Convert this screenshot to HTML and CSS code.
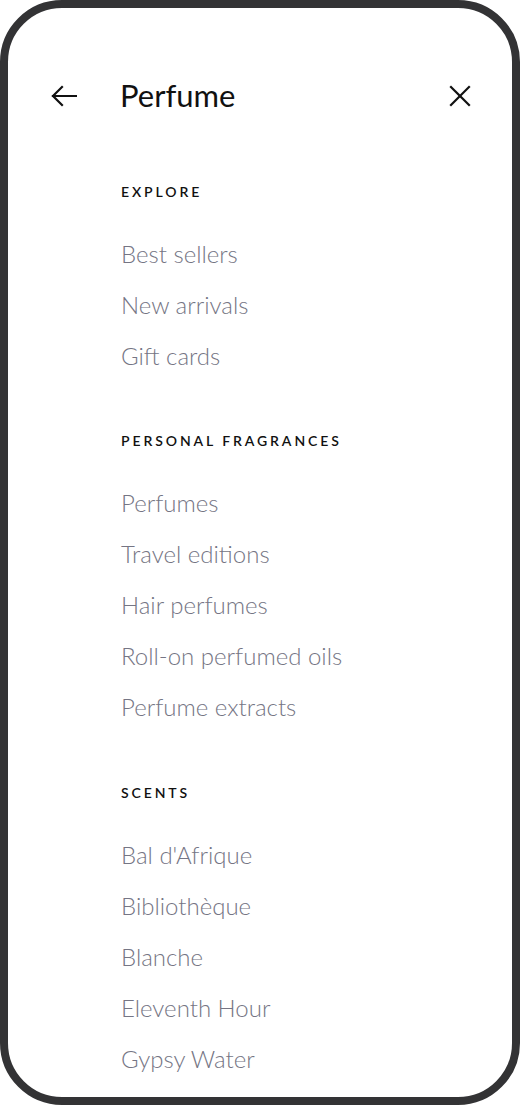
FILE: index.html
```html
<!DOCTYPE html>
<html lang="en">
<head>
<meta charset="utf-8">
<title>Perfume</title>
<link rel="stylesheet" href="styles.css">
</head>
<body>
<div class="phone">
  <header class="header">
    <button class="icon-btn back" aria-label="Back">
      <svg width="26" height="22" viewBox="0 0 26 22" fill="none" stroke="#111" stroke-width="2.2" stroke-linecap="square" stroke-linejoin="miter">
        <path d="M25 11H2"/>
        <path d="M11 2L2 11L11 20"/>
      </svg>
    </button>
    <h1 class="title">Perfume</h1>
    <button class="icon-btn close" aria-label="Close">
      <svg width="22" height="22" viewBox="0 0 22 22" fill="none" stroke="#111" stroke-width="2.2" stroke-linecap="square">
        <path d="M2 2L20 20"/>
        <path d="M20 2L2 20"/>
      </svg>
    </button>
  </header>
  <nav class="menu">
    <section class="group">
      <h2 class="label">Explore</h2>
      <ul class="items">
        <li>Best sellers</li>
        <li>New arrivals</li>
        <li>Gift cards</li>
      </ul>
    </section>
    <section class="group">
      <h2 class="label">Personal fragrances</h2>
      <ul class="items">
        <li>Perfumes</li>
        <li>Travel editions</li>
        <li>Hair perfumes</li>
        <li>Roll-on perfumed oils</li>
        <li>Perfume extracts</li>
      </ul>
    </section>
    <section class="group">
      <h2 class="label">Scents</h2>
      <ul class="items">
        <li>Bal d'Afrique</li>
        <li>Bibliothèque</li>
        <li>Blanche</li>
        <li>Eleventh Hour</li>
        <li>Gypsy Water</li>
      </ul>
    </section>
  </nav>
</div>
</body>
</html>
```

FILE: styles.css
```css
html, body {
  margin: 0;
  padding: 0;
  background: #ffffff;
}

body {
  font-family: "Lato", "Noto Sans", sans-serif;
}

.phone {
  box-sizing: border-box;
  width: 520px;
  height: 1105px;
  border: 8px solid #333335;
  border-radius: 62px;
  background: #ffffff;
  overflow: hidden;
  padding-top: 63px;
}

.header {
  display: flex;
  align-items: center;
  height: 48px;
  padding: 0 41px 0 43px;
}

.icon-btn {
  display: flex;
  align-items: center;
  justify-content: center;
  background: none;
  border: 0;
  padding: 0;
  margin: 0;
  cursor: pointer;
}

.close {
  margin-top: 2px;
}

.back {
  margin-top: 1px;
}

.title {
  flex: 1;
  margin: 0 0 0 43px;
  font-size: 31px;
  font-weight: 400;
  color: #111111;
  letter-spacing: 0;
}

.menu {
  padding: 63px 0 0 113px;
}

.group + .group {
  margin-top: 50px;
}

.group:nth-child(3) {
  margin-top: 51px;
}

.label {
  margin: 0;
  font-size: 14px;
  line-height: 20px;
  font-weight: 600;
  letter-spacing: 2.9px;
  text-transform: uppercase;
  color: #111111;
}

.items {
  list-style: none;
  margin: 26px 0 0;
  padding: 0;
}

.items li {
  font-size: 24px;
  line-height: 51px;
  font-weight: 300;
  color: #757584;
}
```
